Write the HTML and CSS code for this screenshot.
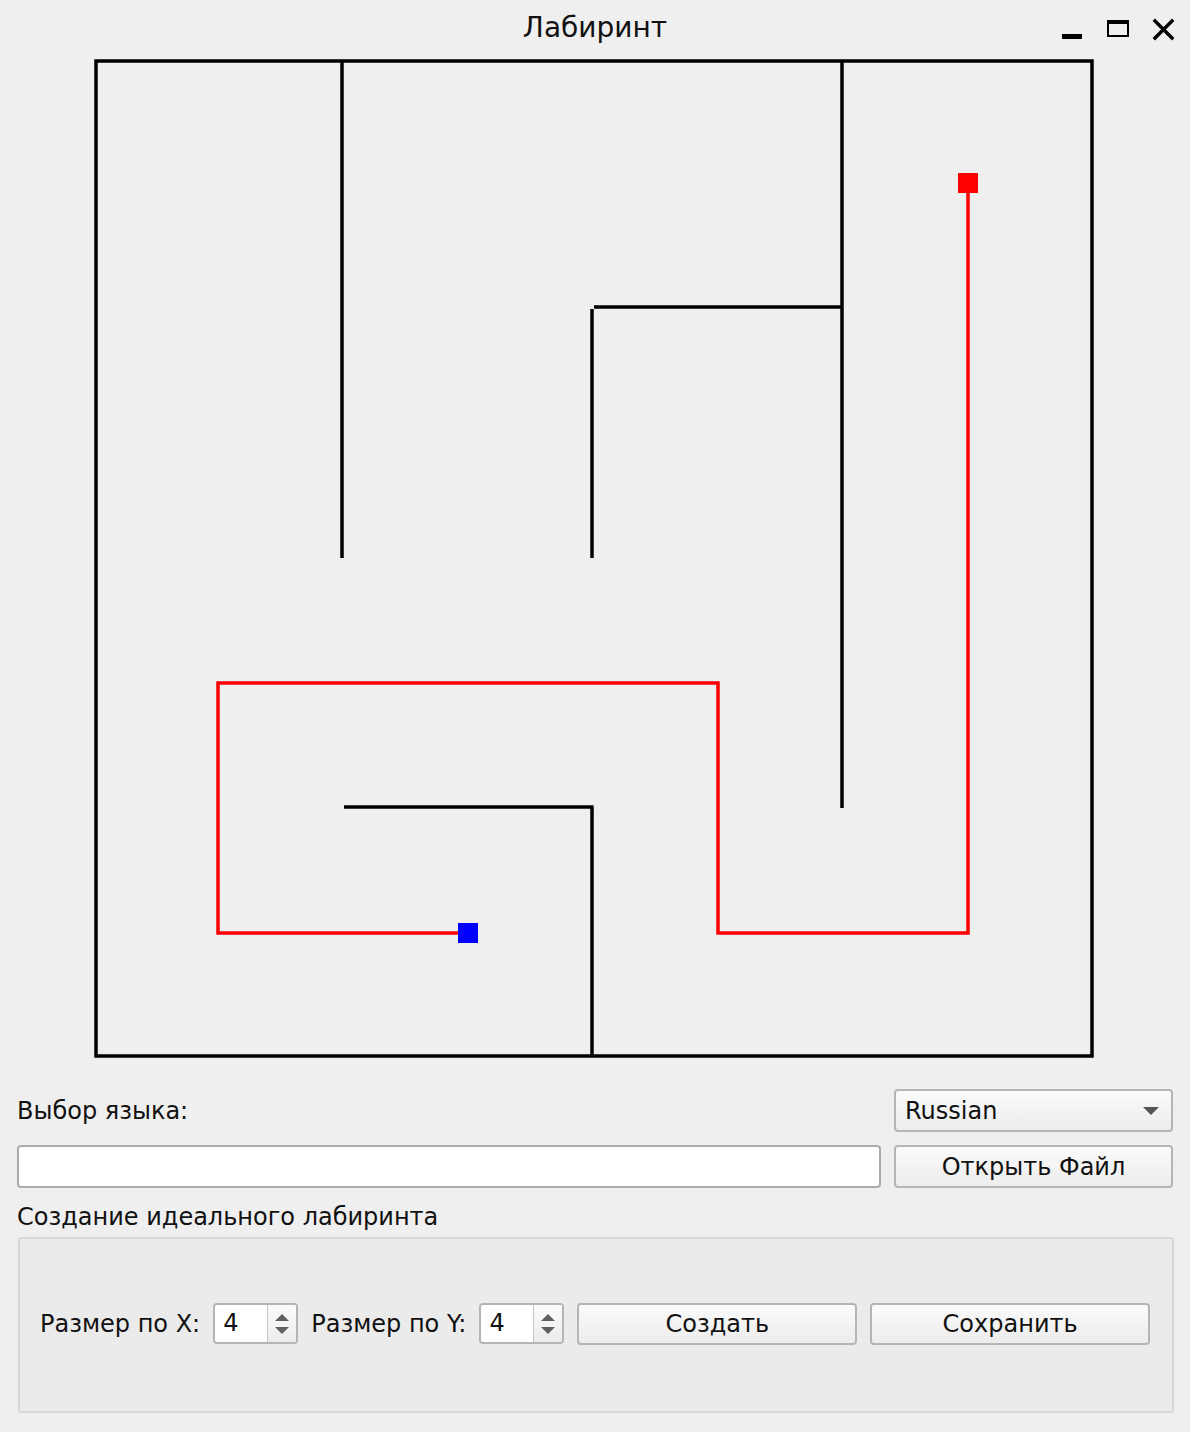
FILE: index.html
```html
<!DOCTYPE html>
<html lang="ru">
<head>
<meta charset="utf-8">
<title>Лабиринт</title>
<link rel="stylesheet" href="styles.css">
</head>
<body>
<div class="window">
  <header class="titlebar">
    <div class="tb-spacer"></div>
    <div class="tb-title">Лабиринт</div>
    <svg class="tb-buttons" viewBox="1050 0 140 50" width="140" height="50">
      <rect x="1062" y="34" width="20" height="5" fill="#000"/>
      <rect x="1108" y="21" width="20" height="15" fill="none" stroke="#000" stroke-width="2"/>
      <rect x="1107" y="20" width="22" height="4" fill="#000"/>
      <path d="M1155 21 L1172 38 M1172 21 L1155 38" stroke="#000" stroke-width="3.4" stroke-linecap="square"/>
    </svg>
  </header>

  <svg class="maze" viewBox="0 50 1190 1020" width="1190" height="1020">
    <g stroke="#000" stroke-width="3.5" fill="none" stroke-linecap="butt">
      <rect x="96" y="61" width="996" height="995"/>
      <line x1="342" y1="61" x2="342" y2="558"/>
      <line x1="842" y1="61" x2="842" y2="808"/>
      <line x1="594" y1="307" x2="842" y2="307"/>
      <line x1="592" y1="309" x2="592" y2="558"/>
      <line x1="344" y1="807" x2="593.5" y2="807"/>
      <line x1="592" y1="807" x2="592" y2="1056"/>
    </g>
    <polyline points="468,933 218,933 218,683 718,683 718,933 968,933 968,183" fill="none" stroke="#ff0000" stroke-width="3.5"/>
    <rect x="458" y="923" width="20" height="20" fill="#0000ff"/>
    <rect x="958" y="173" width="20" height="20" fill="#ff0000"/>
  </svg>

  <section class="controls">
    <div class="row row-lang">
      <span class="label">Выбор языка:</span>
      <div class="combo">
        <span class="combo-text">Russian</span>
        <svg class="combo-arrow" viewBox="0 0 16 8" width="16" height="8"><path d="M0 0 H16 L8 8 Z" fill="#555"/></svg>
      </div>
    </div>
    <div class="row row-file">
      <div class="lineedit"></div>
      <button class="btn btn-open">Открыть Файл</button>
    </div>
    <div class="group-title">Создание идеального лабиринта</div>
    <div class="groupbox">
      <span class="label">Размер по X:</span>
      <div class="spin">
        <span class="spin-value">4</span>
        <div class="spin-arrows">
          <svg viewBox="0 0 16 24" width="16" height="24"><path d="M1 9 L8 2 L15 9 Z M1 15 L15 15 L8 22 Z" fill="#606060"/></svg>
        </div>
      </div>
      <span class="label">Размер по Y:</span>
      <div class="spin">
        <span class="spin-value">4</span>
        <div class="spin-arrows">
          <svg viewBox="0 0 16 24" width="16" height="24"><path d="M1 9 L8 2 L15 9 Z M1 15 L15 15 L8 22 Z" fill="#606060"/></svg>
        </div>
      </div>
      <button class="btn btn-grow">Создать</button>
      <button class="btn btn-grow">Сохранить</button>
    </div>
  </section>
</div>
</body>
</html>
```

FILE: styles.css
```css
html, body {
  margin: 0;
  padding: 0;
  background: #efefef;
}
body {
  font-family: "DejaVu Sans", "Noto Sans", sans-serif;
  color: #111;
}
.window {
  width: 1190px;
  height: 1432px;
  overflow: hidden;
}
.titlebar {
  height: 50px;
  display: grid;
  grid-template-columns: 140px 1fr 140px;
  align-items: start;
}
.tb-title {
  text-align: center;
  font-size: 28px;
  line-height: 28px;
  padding-top: 14px;
  color: #111;
}
.tb-buttons {
  display: block;
}
.maze {
  display: block;
}
.controls {
  padding: 19px 17px 0 17px;
}
.row {
  display: flex;
  align-items: center;
}
.row-lang {
  justify-content: space-between;
  height: 43px;
}
.label {
  font-size: 24px;
  white-space: nowrap;
}
.combo {
  box-sizing: border-box;
  width: 279px;
  height: 43px;
  border: 2px solid #b5b5b5;
  border-radius: 4px;
  background: linear-gradient(#fbfbfb, #ececec);
  display: flex;
  align-items: center;
  justify-content: space-between;
  padding: 0 12px 0 9px;
  font-size: 24px;
}
.combo-arrow {
  display: block;
}
.row-file {
  margin-top: 13px;
  gap: 13px;
}
.lineedit {
  box-sizing: border-box;
  flex: 1;
  height: 43px;
  background: #fff;
  border: 2px solid #ababab;
  border-radius: 4px;
}
.btn {
  box-sizing: border-box;
  height: 43px;
  border: 2px solid #b5b5b5;
  border-radius: 4px;
  background: linear-gradient(#fbfbfb, #ececec);
  font-family: "DejaVu Sans", "Noto Sans", sans-serif;
  font-size: 24px;
  color: #111;
  padding: 0;
}
.btn-open {
  width: 279px;
}
.group-title {
  font-size: 24px;
  height: 39px;
  line-height: 39px;
  padding-top: 10px;
}
.groupbox {
  box-sizing: border-box;
  margin-left: 1px;
  width: 1156px;
  height: 176px;
  background: #ebebeb;
  border: 2px solid #d7d7d7;
  border-radius: 3px;
  display: flex;
  align-items: center;
  gap: 13px;
  padding: 0 22px 3px 20px;
}
.spin {
  box-sizing: border-box;
  width: 85px;
  height: 41px;
  border: 2px solid #b5b5b5;
  border-radius: 4px;
  background: #fff;
  display: flex;
  overflow: hidden;
  flex-shrink: 0;
}
.spin-value {
  flex: 1;
  font-size: 24px;
  line-height: 37px;
  padding-left: 8px;
}
.spin-arrows {
  width: 28px;
  border-left: 1px solid #c4c4c4;
  background: linear-gradient(#fbfbfb, #ececec);
  display: flex;
  align-items: center;
  justify-content: center;
}
.spin-arrows svg {
  display: block;
}
.btn-grow {
  flex: 1;
  height: 42px;
}
```
